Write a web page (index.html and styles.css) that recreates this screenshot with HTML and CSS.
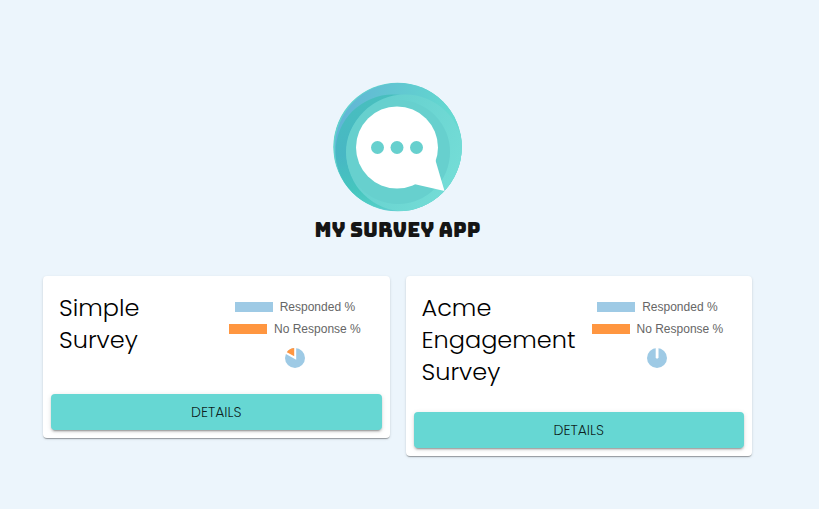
FILE: index.html
```html
<!DOCTYPE html>
<html lang="en">
<head>
  <meta charset="utf-8">
  <title>My Survey App</title>
  <meta name="viewport" content="width=device-width, initial-scale=1">
  <link rel="stylesheet" href="styles.css">
</head>
<body>
  <main class="page">
    <header class="brand">
      <svg class="brand-mark" viewBox="0 0 130 130" aria-hidden="true">
        <defs>
          <linearGradient id="ring" x1="0.05" y1="0.3" x2="0.9" y2="0.4">
            <stop offset="0" stop-color="#62b6d6"/>
            <stop offset="0.25" stop-color="#62bfd3"/>
            <stop offset="0.8" stop-color="#62d2d0"/>
            <stop offset="1" stop-color="#66d9d1"/>
          </linearGradient>
          <linearGradient id="shade" x1="0.3" y1="0" x2="0.4" y2="1">
            <stop offset="0" stop-color="#48bfbe"/>
            <stop offset="0.5" stop-color="#48b7c4"/>
            <stop offset="0.8" stop-color="#45c5be"/>
            <stop offset="1" stop-color="#56cfc8"/>
          </linearGradient>
          <linearGradient id="glow" x1="0" y1="0" x2="1" y2="0.5">
            <stop offset="0.3" stop-color="#66d0cf"/>
            <stop offset="1" stop-color="#73dcd6"/>
          </linearGradient>
          <clipPath id="disc"><circle cx="64.500" cy="65" r="64.300"/></clipPath>
        </defs>
        <g clip-path="url(#disc)">
          <circle cx="65" cy="65" r="65" fill="#62d2ce"/>
          <circle cx="66" cy="65" r="64" fill="url(#ring)"/>
          <circle cx="60" cy="70" r="57.500" fill="url(#shade)"/>
          <circle cx="72" cy="71" r="58.500" fill="url(#glow)"/>
          <circle cx="65" cy="70" r="52" fill="#67d0ce"/>
        </g>
        <circle cx="64" cy="65.500" r="41" fill="#fff"/>
        <path d="M90 66L102.500 78.500L111.500 109L81 102L70 90Z" fill="#fff"/>
        <g fill="#67d0ce">
          <circle cx="44.500" cy="65.500" r="6.500"/>
          <circle cx="64" cy="65.500" r="6.500"/>
          <circle cx="83.500" cy="65.500" r="6.500"/>
        </g>
      </svg>
      <h1 class="brand-name">MY SURVEY APP</h1>
    </header>

    <section class="surveys" aria-label="Surveys">
      <article class="card">
        <div class="card-content">
          <h2 class="card-title">Simple Survey</h2>
          <div class="chart">
            <ul class="legend">
              <li class="legend-item"><span class="swatch swatch-yes"></span>Responded %</li>
              <li class="legend-item"><span class="swatch swatch-no"></span>No Response %</li>
            </ul>
            <svg class="pie" viewBox="0 0 20 20" role="img" aria-label="Mostly responded">
              <circle cx="10" cy="10" r="10" fill="#9ecae5"/>
              <path d="M10 10V0A10 10 0 0 0 1.300 5Z" fill="#ff9640"/>
              <path d="M10.200 -1V10L0 4.400" fill="none" stroke="#fff" stroke-width="2"/>
            </svg>
          </div>
        </div>
        <div class="card-actions"><button class="details" type="button">DETAILS</button></div>
      </article>

      <article class="card">
        <div class="card-content">
          <h2 class="card-title">Acme Engagement Survey</h2>
          <div class="chart">
            <ul class="legend">
              <li class="legend-item"><span class="swatch swatch-yes"></span>Responded %</li>
              <li class="legend-item"><span class="swatch swatch-no"></span>No Response %</li>
            </ul>
            <svg class="pie" viewBox="0 0 20 20" role="img" aria-label="All responded">
              <circle cx="10" cy="10" r="10" fill="#9ecae5"/>
              <path d="M8.700 0H11.500V9.500L10 11L8.700 9.500Z" fill="#fff"/>
            </svg>
          </div>
        </div>
        <div class="card-actions"><button class="details" type="button">DETAILS</button></div>
      </article>
    </section>
  </main>
</body>
</html>
```
FILE: styles.css
```css
* {
  box-sizing: border-box;
}

body {
  margin: 0;
  background: #ecf5fc;
  color: #000;
  font-family: Poppins, Inter, sans-serif;
}

.page {
  padding: 82px 67px 48px 43px;
}

.brand {
  display: flex;
  flex-direction: column;
  align-items: center;
}

.brand-mark {
  width: 130px;
  height: 130px;
}

.brand-name {
  margin: 6px 0 0;
  color: #151515;
  font-family: Bungee, Inter, sans-serif;
  font-size: 20px;
  font-weight: 400;
  line-height: 24px;
  white-space: nowrap;
}

.surveys {
  display: grid;
  grid-template-columns: 1fr 1fr;
  align-items: start;
  gap: 16px;
  margin-top: 34px;
}

.card {
  background: #fff;
  border-radius: 4px;
  box-shadow: 0 2px 1px -1px rgba(0, 0, 0, 0.2), 0 1px 1px rgba(0, 0, 0, 0.14), 0 1px 3px rgba(0, 0, 0, 0.12);
}

.card-content {
  display: grid;
  grid-template-columns: minmax(0, 1fr) minmax(0, 1fr);
  padding: 16px;
}

.card-title {
  margin: 0;
  font-size: 24px;
  font-weight: 300;
  line-height: 32px;
}

.chart {
  display: flex;
  flex-direction: column;
  align-items: center;
  padding: 4px 0 2px;
}

.legend {
  margin: 0;
  padding: 0;
  list-style: none;
  color: #666;
  font-family: "Liberation Sans", Arial, sans-serif;
  font-size: 12px;
  line-height: 22px;
}

.legend-item {
  display: flex;
  align-items: center;
  justify-content: center;
  gap: 7px;
  white-space: nowrap;
}

.swatch {
  width: 38px;
  height: 10px;
}

.swatch-yes {
  background: #9ecae5;
}

.swatch-no {
  background: #ff9640;
}

.pie {
  width: 20px;
  height: 20px;
  margin-top: 8px;
}

.card-actions {
  padding: 8px;
}

.details {
  display: block;
  width: 100%;
  padding: 6px 16px;
  border: 0;
  border-radius: 4px;
  background: #66d7d3;
  box-shadow: 0 3px 1px -2px rgba(0, 0, 0, 0.2), 0 2px 2px rgba(0, 0, 0, 0.14), 0 1px 5px rgba(0, 0, 0, 0.12);
  color: rgba(0, 0, 0, 0.87);
  font-family: inherit;
  font-size: 14px;
  font-weight: 300;
  line-height: 24px;
  cursor: pointer;
}
```
